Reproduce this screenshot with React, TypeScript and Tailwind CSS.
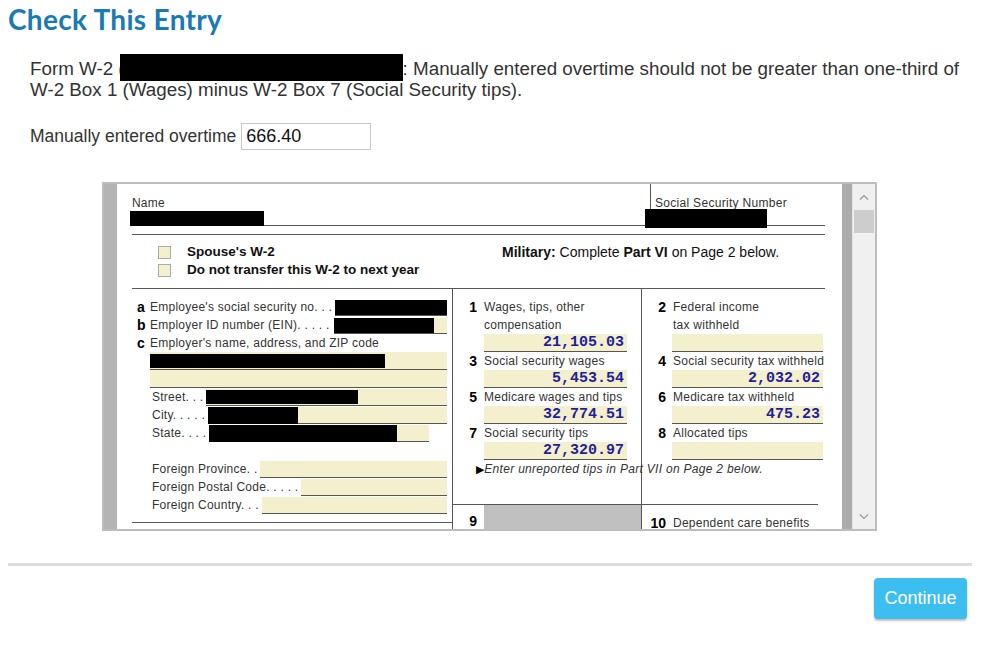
const yellow = "bg-[#f4efcc]";

function Amount({ value, className }: { value?: string; className: string }) {
  return (
    <div
      className={`${className} h-[18px] ${yellow} border-b border-[#555] flex items-center justify-end pr-[3px] font-['Liberation_Mono',monospace] font-bold text-[15px] leading-[17px] text-[#1f1f9e]`}
    >
      {value}
    </div>
  );
}

function Box({ n, lines, value, fieldClass }: { n: string; lines: string[]; value?: string; fieldClass: string }) {
  return (
    <div>
      <div className="flex">
        <span className="w-[24px] shrink-0 text-right font-bold text-[14px] leading-[18px] text-black">{n}</span>
        <div className="ml-[7px]">
          {lines.map((l) => (
            <div key={l} className="text-[12px] leading-[18px] tracking-[0.25px] whitespace-nowrap">
              {l}
            </div>
          ))}
        </div>
      </div>
      <Amount value={value} className={fieldClass} />
    </div>
  );
}

function LabelRow({ label, children }: { label: string; children?: React.ReactNode }) {
  return (
    <div className="flex h-[18px] items-end pl-[20px]">
      <span className="text-[12px] leading-[18px] tracking-[0.25px] whitespace-nowrap">{label}</span>
      {children}
    </div>
  );
}

function Chevron({ down }: { down?: boolean }) {
  return (
    <svg width="10" height="6" viewBox="0 0 10 6" className={down ? "rotate-180" : ""}>
      <path d="M1 5.5 L5 1.5 L9 5.5" fill="none" stroke="#9a9a9a" strokeWidth="1.2" />
    </svg>
  );
}

function W2Form() {
  return (
    <div className="pl-[13px] w-[708px] text-[#333]">
      {/* name / ssn */}
      <div className="flex w-[695px] h-[42px] border-b border-[#555]">
        <div className="w-[520px] pl-[2px]">
          <div className="pt-[12px] text-[12px] tracking-[0.2px] leading-[14px]">Name</div>
          <div className="mt-[1px] -ml-[2px] h-[15px] w-[134px] bg-black" />
        </div>
        <div className="flex-1 border-l border-[#555] pl-[4px]">
          <div className="pt-[12px] text-[12px] tracking-[0.3px] leading-[14px] whitespace-nowrap">Social Security Number</div>
          <div className="-mt-[1px] -ml-[10px] h-[19px] w-[122px] bg-black relative" />
        </div>
      </div>

      {/* checkboxes */}
      <div className="mt-[8px] ml-[2px] w-[693px] border-t border-[#555] h-[55px] border-b pt-[8px] flex leading-[18px] text-[#111]">
        <div className="w-[370px] pl-[26px] text-[13.5px]">
          <div className="flex items-center h-[18px]">
            <span className={`w-[13px] h-[13px] ${yellow} border border-[#aaa]`} />
            <span className="ml-[16px] font-bold">Spouse's W-2</span>
          </div>
          <div className="flex items-center h-[18px]">
            <span className={`w-[13px] h-[13px] ${yellow} border border-[#aaa]`} />
            <span className="ml-[16px] font-bold">Do not transfer this W-2 to next year</span>
          </div>
        </div>
        <div className="whitespace-nowrap text-[14px]">
          <b>Military:</b> Complete <b>Part VI</b> on Page 2 below.
        </div>
      </div>

      {/* main grid */}
      <div className="flex ml-[2px]">
        {/* left column */}
        <div className="w-[320px] shrink-0 pt-[9px] pr-[5px] h-[234px] border-b border-[#555]">
          <div className="flex h-[18px] items-end">
            <span className="w-[18px] pl-[5px] font-bold text-[14px] leading-[18px] text-black">a</span>
            <span className="text-[12px] leading-[18px] tracking-[0.25px] whitespace-nowrap">Employee's social security no. . .</span>
            <div className={`ml-[3px] flex-1 h-[16px] border-b border-[#555] ${yellow}`}>
              <div className="h-[15px] bg-black" />
            </div>
          </div>
          <div className="flex h-[18px] items-end">
            <span className="w-[18px] pl-[5px] font-bold text-[14px] leading-[18px] text-black">b</span>
            <span className="text-[12px] leading-[18px] tracking-[0.25px] whitespace-nowrap">Employer ID number (EIN). . . . .</span>
            <div className={`ml-[4px] flex-1 h-[16px] border-b border-[#555] ${yellow}`}>
              <div className="h-[15px] w-[100px] bg-black" />
            </div>
          </div>
          <div className="flex h-[18px] items-end">
            <span className="w-[18px] pl-[5px] font-bold text-[14px] leading-[18px] text-black">c</span>
            <span className="text-[12px] leading-[18px] tracking-[0.25px] whitespace-nowrap">Employer's name, address, and ZIP code</span>
          </div>
          <div className="pl-[18px]">
            <div className={`h-[18px] ${yellow} border-b border-[#555] pt-[2px]`}>
              <div className="h-[14px] w-[235px] bg-black" />
            </div>
            <div className={`h-[18px] ${yellow} border-b border-[#555]`} />
          </div>
          <LabelRow label="Street. . .">
            <div className={`ml-[3px] flex-1 h-[17px] border-b border-[#555] ${yellow}`}>
              <div className="h-[14px] mt-[1px] w-[152px] bg-black" />
            </div>
          </LabelRow>
          <LabelRow label="City. . . . .">
            <div className={`ml-[3px] flex-1 h-[17px] border-b border-[#555] ${yellow}`}>
              <div className="h-[17px] w-[90px] bg-black" />
            </div>
          </LabelRow>
          <LabelRow label="State. . . .">
            <div className={`ml-[3px] mr-[18px] flex-1 h-[17px] border-b border-[#555] ${yellow}`}>
              <div className="h-[17px] w-[188px] bg-black" />
            </div>
          </LabelRow>
          <div className="h-[18px]" />
          <LabelRow label="Foreign Province. .">
            <div className={`ml-[3px] flex-1 h-[17px] border-b border-[#555] ${yellow}`} />
          </LabelRow>
          <LabelRow label="Foreign Postal Code. . . . .">
            <div className={`ml-[3px] flex-1 h-[17px] border-b border-[#555] ${yellow}`} />
          </LabelRow>
          <LabelRow label="Foreign Country. . .">
            <div className={`ml-[3px] flex-1 h-[17px] border-b border-[#555] ${yellow}`} />
          </LabelRow>
        </div>

        {/* right part */}
        <div className="w-[366px] border-l border-[#555]">
          <div className="flex h-[216px] border-b border-[#555]">
            <div className="w-[188px] shrink-0 pt-[9px] relative">
              <Box n="1" lines={["Wages, tips, other", "compensation"]} value="21,105.03" fieldClass="ml-[31px] mr-[14px]" />
              <Box n="3" lines={["Social security wages"]} value="5,453.54" fieldClass="ml-[31px] mr-[14px]" />
              <Box n="5" lines={["Medicare wages and tips"]} value="32,774.51" fieldClass="ml-[31px] mr-[14px]" />
              <Box n="7" lines={["Social security tips"]} value="27,320.97" fieldClass="ml-[31px] mr-[14px]" />
              <div className="pl-[23px] text-[12px] leading-[18px] italic whitespace-nowrap tracking-[0.3px]">
                <span className="text-[11px] not-italic text-black">▶</span>Enter unreported tips in Part VII on Page 2 below.
              </div>
            </div>
            <div className="flex-1 border-l border-[#555] pt-[9px]">
              <Box n="2" lines={["Federal income", "tax withheld"]} fieldClass="ml-[30px] mr-[1px]" />
              <Box n="4" lines={["Social security tax withheld"]} value="2,032.02" fieldClass="ml-[30px] mr-[1px]" />
              <Box n="6" lines={["Medicare tax withheld"]} value="475.23" fieldClass="ml-[30px] mr-[1px]" />
              <Box n="8" lines={["Allocated tips"]} fieldClass="ml-[30px] mr-[1px]" />
            </div>
          </div>
          <div className="flex h-[40px]">
            <div className="w-[188px] shrink-0 flex">
              <span className="w-[24px] shrink-0 text-right pt-[7px] font-bold text-[14px] leading-[18px] text-black">9</span>
              <div className="ml-[7px] flex-1 bg-[#c0c0c0]" />
            </div>
            <div className="flex-1 border-l border-[#555] flex pt-[9px]">
              <span className="w-[24px] shrink-0 text-right font-bold text-[14px] leading-[18px] text-black">10</span>
              <span className="ml-[7px] text-[12px] leading-[18px] tracking-[0.25px] whitespace-nowrap">Dependent care benefits</span>
            </div>
          </div>
        </div>
      </div>
    </div>
  );
}

export default function App() {
  return (
    <div className="w-[992px] h-[651px] bg-white font-['Liberation_Sans',Arial,sans-serif] text-[#333] overflow-hidden">
      <h1 className="pl-[8px] pt-[1px] font-['Lato',sans-serif] font-bold text-[28px] tracking-[0.3px] leading-[36px] text-[#1a7ab4]">
        Check This Entry
      </h1>

      <p className="mt-[21px] pl-[30px] text-[18.8px] leading-[21px] text-[#333] whitespace-nowrap">
        Form W-2 (
        <span className="relative inline-block w-[283px] h-[21px] align-top -ml-[5px]">
          <span className="absolute left-0 right-0 -top-[4px] h-[27px] bg-black" />
        </span>
        : Manually entered overtime should not be greater than one-third of
        <br />
        W-2 Box 1 (Wages) minus W-2 Box 7 (Social Security tips).
      </p>

      <div className="mt-[23px] pl-[30px] flex items-center text-[17.5px]">
        <span>Manually entered overtime</span>
        <input
          readOnly
          value="666.40"
          className="ml-[5px] w-[130px] h-[27px] border border-[#c8c8c8] px-[4px] text-[18px] text-[#111] outline-none"
        />
      </div>

      <div className="mt-[32px] ml-[102px] w-[775px] h-[349px] border-2 border-[#bdbdbd] flex">
        <div className="w-[13px] bg-[#b4b4b4]" />
        <div className="w-[725px] bg-white overflow-hidden">
          <W2Form />
        </div>
        <div className="w-[10px] bg-[#acacac]" />
        <div className="w-[23px] bg-[#f0f0f0] border-l border-[#e4e4e4] flex flex-col">
          <div className="h-[26px] flex items-center justify-center">
            <Chevron />
          </div>
          <div className="mx-[1px] h-[23px] bg-[#cdcdcd]" />
          <div className="flex-1" />
          <div className="h-[24px] flex items-center justify-center">
            <Chevron down />
          </div>
        </div>
      </div>

      <div className="mt-[32px] mx-[8px] w-[964px] h-[3px] bg-[#dcdcdc]" />

      <div className="mt-[12px] flex justify-end pr-[25px]">
        <button className="w-[93px] h-[41px] rounded-[4px] bg-[#3cbff0] text-white text-[18px] shadow-[0_2px_2px_rgba(0,0,0,0.25)]">
          Continue
        </button>
      </div>
    </div>
  );
}
